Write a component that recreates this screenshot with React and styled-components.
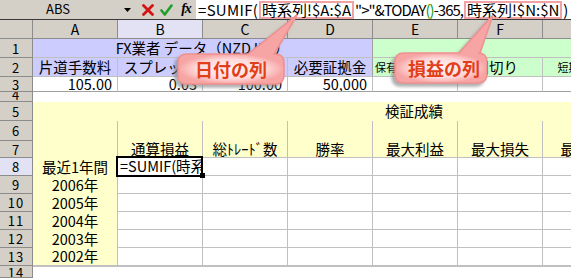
import React from 'react';
import styled, { createGlobalStyle } from 'styled-components';

const FONT = `"Noto Sans CJK JP", "Noto Sans", sans-serif`;
const LAV = '#ccccff';
const GRN = '#ccffcc';
const YEL = '#ffffcc';
const GRID = '#c0c0c0';
const DARK = '#a0a0a0';

const GlobalStyle = createGlobalStyle`
  html, body { margin: 0; padding: 0; background: #fff; overflow: hidden; }
  body { font-family: ${FONT}; }
`;

const Window = styled.div`
  position: relative;
  width: 571px;
  height: 278px;
  overflow: hidden;
  background: #fff;
  font-family: ${FONT};
  color: #000;
`;

const FormulaBar = styled.div`
  display: flex;
  height: 20px;
  box-sizing: border-box;
  border-bottom: 1px solid #3a3a3a;
  background: #d4d0c8;
`;

const NameBox = styled.div`
  width: 116px;
  display: flex;
  justify-content: center;
  align-items: center;
  font-size: 13px;
  line-height: 1;
  padding-bottom: 3px;
  box-sizing: border-box;
`;

const IconSlot = styled.div`
  width: ${p => p.$w}px;
  display: flex;
  justify-content: center;
  align-items: center;
`;

const FxText = styled.span`
  font-family: "Liberation Serif", serif;
  font-style: italic;
  font-weight: 700;
  font-size: 14px;
  letter-spacing: -1px;
  line-height: 1;
  padding-bottom: 2px;
`;

const FormulaInput = styled.div`
  flex: 1;
  background: #fff;
  display: flex;
  align-items: center;
  padding-left: 2px;
  font-size: 15px;
  line-height: 1;
  white-space: nowrap;
  overflow: hidden;
`;

const Seg = styled.span`
  letter-spacing: ${p => p.$ls || 0}px;
`;

const RefBox = styled.span`
  display: inline-block;
  box-sizing: border-box;
  height: 18px;
  line-height: 14px;
  border: 2px solid #f2a2a2;
  padding: 0 1px;
  margin: 0 1px;
`;

const Paren = styled.span`
  color: #119a11;
`;

const Sheet = styled.div`
  display: grid;
  grid-template-columns: 33px repeat(7, 85px);
  grid-template-rows: 19px 19px 19px 15px 10px 19px 20px 17px repeat(6, 18px) 12px;
`;

const Head = styled.div`
  box-sizing: border-box;
  background: ${p => (p.$active ? '#e2e2f4' : '#d4d0c8')};
  border-right: 1px solid #8c8c8c;
  border-bottom: 1px solid #8c8c8c;
  display: flex;
  justify-content: center;
  align-items: ${p => p.$v || 'center'};
  font-size: ${p => p.$fs || 14}px;
  letter-spacing: ${p => p.$ls || 0}px;
  line-height: 1;
  overflow: hidden;
`;

const Cell = styled.div`
  box-sizing: border-box;
  min-width: 0;
  overflow: hidden;
  display: flex;
  align-items: ${p => p.$v || 'center'};
  justify-content: ${p => p.$h || 'center'};
  background: ${p => p.$bg || '#fff'};
  border-right: ${p => (p.$br ? `1px solid ${p.$br}` : 'none')};
  border-bottom: ${p => (p.$bb ? `1px solid ${p.$bb}` : 'none')};
  border-top: ${p => (p.$bt ? `1px solid ${p.$bt}` : 'none')};
  font-size: ${p => p.$fs || 14.5}px;
  line-height: 1;
  white-space: nowrap;
  padding: 0 ${p => p.$pr ?? 2}px ${p => p.$pb ?? 0}px ${p => p.$pl ?? 2}px;
  grid-column: ${p => (p.$span ? `span ${p.$span}` : 'auto')};
  grid-row: ${p => (p.$rspan ? `span ${p.$rspan}` : 'auto')};
`;

const ActiveCell = styled.div`
  position: relative;
  z-index: 2;
  box-sizing: border-box;
  background: #fff;
  border-right: 1px solid ${GRID};
  border-bottom: 1px solid ${GRID};
  &::after {
    content: '';
    position: absolute;
    left: -2px;
    right: -1px;
    top: -2px;
    bottom: -2px;
    border: 2px solid #000;
    pointer-events: none;
  }
  &::before {
    content: '';
    position: absolute;
    right: -3px;
    bottom: -3px;
    width: 5px;
    height: 5px;
    background: #000;
    z-index: 1;
  }
`;

const ActiveText = styled.span`
  display: flex;
  align-items: center;
  height: 100%;
  overflow: hidden;
  white-space: nowrap;
  padding-left: 2px;
  font-size: 14.5px;
  line-height: 1;
`;

const CalloutBox = styled.div`
  position: absolute;
  left: ${p => p.$x}px;
  top: ${p => p.$y}px;
  width: ${p => p.$w}px;
  height: ${p => p.$h}px;
  display: flex;
  align-items: center;
  justify-content: center;
  z-index: 5;
`;

const CalloutShape = styled.svg`
  position: absolute;
  left: 0;
  top: 0;
  overflow: visible;
`;

const CalloutText = styled.span`
  position: relative;
  font-size: 18px;
  font-weight: 700;
  color: #e23e18;
  line-height: 1;
  padding-left: ${p => p.$pl || 0}px;
`;

function Callout({ id, x, y, w, h, tail, label, pl }) {
  const r = 9;
  const [b1, ax, ay, b2] = tail;
  const d = `M${r},0 L${b1},0 L${ax},${ay} L${b2},0 L${w - r},0 Q${w},0 ${w},${r} L${w},${h - r} Q${w},${h} ${w - r},${h} L${r},${h} Q0,${h} 0,${h - r} L0,${r} Q0,0 ${r},0 Z`;
  return (
    <CalloutBox $x={x} $y={y} $w={w} $h={h}>
      <CalloutShape width={w} height={h}>
        <defs>
          <radialGradient
            id={`cg${id}`}
            gradientUnits="userSpaceOnUse"
            cx={w / 2}
            cy={h / 2}
            r={w / 2}
            gradientTransform={`translate(${w / 2} ${h / 2}) scale(1 ${h / w}) translate(${-w / 2} ${-h / 2})`}
          >
            <stop offset="0%" stopColor="#fff4f4" />
            <stop offset="65%" stopColor="#ffd9d9" />
            <stop offset="100%" stopColor="#f7a4a4" />
          </radialGradient>
          <filter id={`cs${id}`} x="-30%" y="-200%" width="160%" height="400%">
            <feDropShadow dx="-3" dy="3" stdDeviation="1.5" floodColor="#7a7a7a" floodOpacity="0.6" />
          </filter>
        </defs>
        <path d={d} fill={`url(#cg${id})`} stroke="#ef9090" strokeWidth="1.5" filter={`url(#cs${id})`} />
      </CalloutShape>
      <CalloutText $pl={pl}>{label}</CalloutText>
    </CalloutBox>
  );
}

const years = ['2006年', '2005年', '2004年', '2003年', '2002年'];
const cols = ['A', 'B', 'C', 'D', 'E', 'F', 'G'];

export default function App() {
  return (
    <Window>
      <GlobalStyle />
      <FormulaBar>
        <NameBox>ABS</NameBox>
        <IconSlot $w={23}>
          <svg width="7" height="4" viewBox="0 0 7 4"><polygon points="0,0 7,0 3.5,4" fill="#000" /></svg>
        </IconSlot>
        <IconSlot $w={18}>
          <svg width="12" height="12" viewBox="0 0 12 12">
            <path d="M1.5 1.5 L10.5 10.5 M10.5 1.5 L1.5 10.5" stroke="#d41414" strokeWidth="2.8" strokeLinecap="round" />
          </svg>
        </IconSlot>
        <IconSlot $w={19}>
          <svg width="13" height="12" viewBox="0 0 13 12">
            <path d="M1.5 6.5 L4.8 10.5 L11.5 1.5" stroke="#1e9e2a" strokeWidth="2.6" fill="none" strokeLinecap="round" strokeLinejoin="round" />
          </svg>
        </IconSlot>
        <IconSlot $w={20}>
          <FxText>fx</FxText>
        </IconSlot>
        <FormulaInput>
          <Seg $ls={0.3}>=SUMIF(</Seg>
          <RefBox>時系列!$A:$A</RefBox>
          <Seg $ls={-1}>{'">"&TODAY'}<Paren>()</Paren>-365,</Seg>
          <RefBox>時系列!$N:$N</RefBox>
          <Seg>)</Seg>
        </FormulaInput>
      </FormulaBar>

      <Sheet>
        <Head />
        {cols.map(c => (
          <Head key={c} $active={c === 'B'}>{c}</Head>
        ))}

        {/* row 1 */}
        <Head $fs={13} $ls={1}>1</Head>
        <Cell $span={4} $bg={LAV} $br={DARK} $bb={GRID}>FX業者 データ（NZDJPY）</Cell>
        <Cell $span={3} $bg={GRN} $bb={GRID} />

        {/* row 2 */}
        <Head $fs={13} $ls={1}>2</Head>
        <Cell $bg={LAV} $br={GRID} $bb={GRID}>片道手数料</Cell>
        <Cell $bg={LAV} $br={GRID} $bb={GRID}>スプレッド</Cell>
        <Cell $bg={LAV} $br={GRID} $bb={GRID}>取引単位</Cell>
        <Cell $bg={LAV} $br={DARK} $bb={GRID}>必要証拠金</Cell>
        <Cell $bg={GRN} $br={GRID} $bb={GRID} $h="flex-start" $fs={11}>保有期間</Cell>
        <Cell $bg={GRN} $br={GRID} $bb={GRID} $h="flex-start">時間切り</Cell>
        <Cell $bg={GRN} $br={GRID} $bb={GRID} $fs={11}>短期平均線</Cell>

        {/* row 3 */}
        <Head $fs={13} $ls={1}>3</Head>
        <Cell $h="flex-end" $pr={5} $br={GRID} $bb={DARK}>105.00</Cell>
        <Cell $h="flex-end" $pr={5} $br={GRID} $bb={DARK}>0.03</Cell>
        <Cell $h="flex-end" $pr={5} $br={GRID} $bb={DARK}>100.00</Cell>
        <Cell $h="flex-end" $pr={5} $br={GRID} $bb={DARK}>50,000</Cell>
        <Cell $br={GRID} $bb={DARK} />
        <Cell $br={GRID} $bb={DARK} />
        <Cell $br={GRID} $bb={DARK} />

        {/* row 4 */}
        <Head $fs={13} $ls={1} $v="flex-end">4</Head>
        <Cell $span={7} />

        {/* row 5 */}
        <Head $fs={13} $ls={1}>5</Head>
        <Cell $span={7} $bg={YEL} $h="flex-start" $pl={352}>検証成績</Cell>

        {/* rows 6-7 */}
        <Head $fs={13} $ls={1}>6</Head>
        <Cell $rspan={2} $bg={YEL} $br={GRID} />
        <Cell $rspan={2} $bg={YEL} $br={GRID} $bb={GRID} $v="flex-end" $pb={1}>通算損益</Cell>
        <Cell $rspan={2} $bg={YEL} $br={GRID} $bb={GRID} $v="flex-end" $pb={1}>総ﾄﾚｰﾄﾞ数</Cell>
        <Cell $rspan={2} $bg={YEL} $br={GRID} $bb={GRID} $v="flex-end" $pb={1}>勝率</Cell>
        <Cell $rspan={2} $bg={YEL} $br={GRID} $bb={GRID} $v="flex-end" $pb={1}>最大利益</Cell>
        <Cell $rspan={2} $bg={YEL} $br={GRID} $bb={GRID} $v="flex-end" $pb={1}>最大損失</Cell>
        <Cell $rspan={2} $bg={YEL} $br={GRID} $bb={GRID} $v="flex-end" $pb={1}>最大DD</Cell>
        <Head $fs={13} $ls={1}>7</Head>

        {/* row 8 */}
        <Head $fs={13} $ls={1} $active>8</Head>
        <Cell $bg={YEL} $br={GRID}>最近1年間</Cell>
        <ActiveCell>
          <ActiveText>=SUMIF(時系列!$A:$A</ActiveText>
        </ActiveCell>
        {[0, 1, 2, 3, 4].map(i => (
          <Cell key={i} $br={GRID} $bb={GRID} />
        ))}

        {/* rows 9-13 */}
        {years.map((y, ri) => (
          <React.Fragment key={y}>
            <Head $fs={13} $ls={1}>{9 + ri}</Head>
            <Cell $bg={YEL} $br={GRID} $bb={ri === 4 ? GRID : undefined}>{y}</Cell>
            {[0, 1, 2, 3, 4, 5].map(i => (
              <Cell key={i} $br={GRID} $bb={GRID} />
            ))}
          </React.Fragment>
        ))}

        {/* row 14 */}
        <Head $fs={13} $ls={1} $v="flex-start">14</Head>
        <Cell $span={7} $bt={GRID} />
      </Sheet>

      <Callout id="1" x={178} y={54} w={106} h={30} tail={[70, 119, -39, 96]} label="日付の列" />
      <Callout id="2" x={395} y={53} w={92} h={30} tail={[64, 98, -38, 85]} label="損益の列" pl={6} />
    </Window>
  );
}
